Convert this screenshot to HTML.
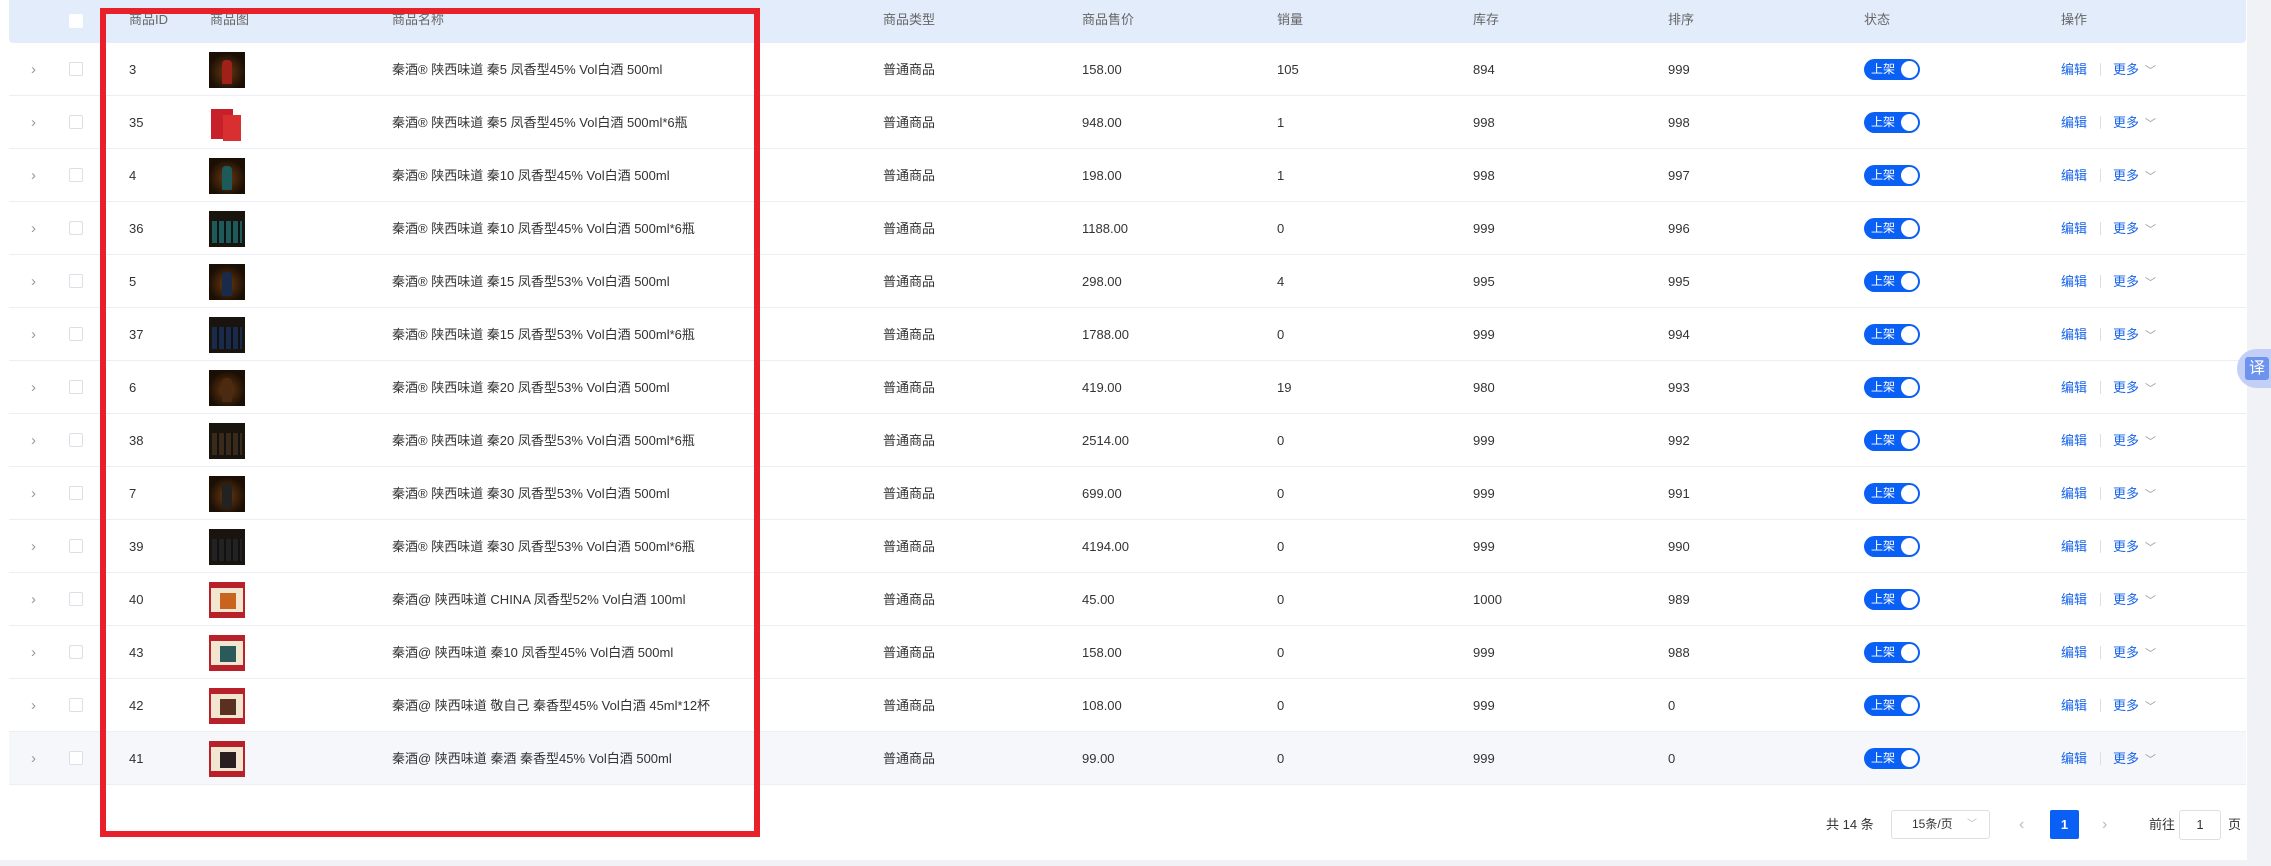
<!DOCTYPE html>
<html><head><meta charset="utf-8">
<style>
*{box-sizing:border-box;margin:0;padding:0}
body{width:2271px;height:866px;background:#f0f2f5;position:relative;overflow:hidden;font-family:"Liberation Sans","Noto Sans CJK SC",sans-serif;font-size:13px;color:#333}
.page{position:absolute;left:0;top:0;width:2247px;height:860px;background:#fff}
.hdr{position:absolute;left:9px;top:0;width:2237px;height:43px;background:#e3ecfb;border-radius:0 0 4px 4px;color:#666}
.c{position:absolute;white-space:nowrap}
.hdr .c{top:0;height:40px;line-height:40px}
.row{position:absolute;left:9px;width:2237px;height:53px;border-bottom:1px solid #ebeef5}
.row .c{top:0;height:53px;line-height:53px}
.cb{position:absolute;left:60px;width:14px;height:14px;border:1px solid #dcdfe6;border-radius:2px;background:#fff}
.arr{position:absolute;left:22px;top:0;line-height:53px;color:#999;font-size:15px}
.img{position:absolute;left:200px;top:9px;width:36px;height:36px}
.sw{position:absolute;left:1855px;top:16px;width:56px;height:21px;background:#0a5ff5;border-radius:11px;color:#fff;font-size:12px;line-height:21px;padding-left:7px}
.sw::after{content:"";position:absolute;right:2px;top:2px;width:17px;height:17px;border-radius:50%;background:#fff}
.op{position:absolute;left:2052px;top:0;line-height:53px;color:#1764ea;white-space:nowrap}
.op .sep{display:inline-block;width:1px;height:13px;background:#dcdfe6;margin:0 12px 0 13px;vertical-align:-2px}
.op .ch{color:#99a;font-size:11px;margin-left:6px}
.red{position:absolute;left:100px;top:8px;width:660px;height:829px;border:6px solid #e8202a}
.pg{position:absolute;top:810px;height:29px;line-height:29px;white-space:nowrap}
</style></head><body>
<div class="page">
<div class="hdr">
 <div class="cb" style="top:14px;border-color:#fff"></div>
 <div class="c" style="left:120px">商品ID</div>
 <div class="c" style="left:201px">商品图</div>
 <div class="c" style="left:383px">商品名称</div>
 <div class="c" style="left:874px">商品类型</div>
 <div class="c" style="left:1073px">商品售价</div>
 <div class="c" style="left:1268px">销量</div>
 <div class="c" style="left:1464px">库存</div>
 <div class="c" style="left:1659px">排序</div>
 <div class="c" style="left:1855px">状态</div>
 <div class="c" style="left:2052px">操作</div>
</div>
<div id="rows"></div>
<div class="pg" style="left:1826px">共 14 条</div>
<div class="pg" style="left:1891px;width:99px;border:1px solid #dcdfe6;border-radius:3px;font-size:12px;line-height:27px;padding-left:20px">15条/页<span style="position:absolute;right:12px;color:#bbb;font-size:10px">﹀</span></div>
<div class="pg" style="left:2019px;color:#bbb;font-size:16px">‹</div>
<div class="pg" style="left:2050px;width:29px;background:#0a5ff5;color:#fff;border-radius:2px;text-align:center;font-weight:bold">1</div>
<div class="pg" style="left:2102px;color:#bbb;font-size:16px">›</div>
<div class="pg" style="left:2149px">前往</div>
<div class="pg" style="left:2179px;width:42px;height:30px;border:1px solid #dcdfe6;border-radius:3px;text-align:center;line-height:28px">1</div>
<div class="pg" style="left:2228px">页</div>
<div class="red"></div>
</div>
<div style="position:absolute;left:2237px;top:349px;width:34px;height:39px;background:#c3cff7;border-radius:20px 0 0 20px"><div style="position:absolute;left:8px;top:8px;width:24px;height:23px;background:#6d93ee;border-radius:3px;color:#fff;text-align:center;line-height:23px;font-size:16px">译</div></div>
<script>
var d=[
[3,"秦酒® 陕西味道 秦5 凤香型45% Vol白酒 500ml","158.00",105,894,999,"d","#a0201a"],
[35,"秦酒® 陕西味道 秦5 凤香型45% Vol白酒 500ml*6瓶","948.00",1,998,998,"r","#c0202a"],
[4,"秦酒® 陕西味道 秦10 凤香型45% Vol白酒 500ml","198.00",1,998,997,"d","#1d5a5a"],
[36,"秦酒® 陕西味道 秦10 凤香型45% Vol白酒 500ml*6瓶","1188.00",0,999,996,"g","#1d5a5a"],
[5,"秦酒® 陕西味道 秦15 凤香型53% Vol白酒 500ml","298.00",4,995,995,"d","#1a2a4a"],
[37,"秦酒® 陕西味道 秦15 凤香型53% Vol白酒 500ml*6瓶","1788.00",0,999,994,"g","#1a2a4a"],
[6,"秦酒® 陕西味道 秦20 凤香型53% Vol白酒 500ml","419.00",19,980,993,"d","#4a2a10"],
[38,"秦酒® 陕西味道 秦20 凤香型53% Vol白酒 500ml*6瓶","2514.00",0,999,992,"g","#3a2a1a"],
[7,"秦酒® 陕西味道 秦30 凤香型53% Vol白酒 500ml","699.00",0,999,991,"d","#222"],
[39,"秦酒® 陕西味道 秦30 凤香型53% Vol白酒 500ml*6瓶","4194.00",0,999,990,"g","#222"],
[40,"秦酒@ 陕西味道 CHINA 凤香型52% Vol白酒 100ml","45.00",0,1000,989,"c","#c8641e"],
[43,"秦酒@ 陕西味道 秦10 凤香型45% Vol白酒 500ml","158.00",0,999,988,"c","#2a5a5a"],
[42,"秦酒@ 陕西味道 敬自己 秦香型45% Vol白酒 45ml*12杯","108.00",0,999,0,"c","#5a3020"],
[41,"秦酒@ 陕西味道 秦酒 秦香型45% Vol白酒 500ml","99.00",0,999,0,"c","#2a2020"]];
var h="";
d.forEach(function(r,i){
 var img;
 if(r[6]=="d") img='<div class="img" style="background:radial-gradient(circle at 50% 55%,#6a3a10,#1a0e05 70%)"><div style="position:absolute;left:13px;top:8px;width:10px;height:24px;background:'+r[7]+';border-radius:4px 4px 1px 1px"></div></div>';
 else if(r[6]=="r") img='<div class="img" style="background:#fff"><div style="position:absolute;left:2px;top:4px;width:22px;height:30px;background:#c8202a"></div><div style="position:absolute;left:14px;top:10px;width:18px;height:26px;background:#d83030"></div></div>';
 else if(r[6]=="g") img='<div class="img" style="background:#1a140e"><div style="position:absolute;left:3px;top:10px;width:30px;height:22px;background:repeating-linear-gradient(90deg,'+r[7]+' 0 5px,#111 5px 7px)"></div></div>';
 else img='<div class="img" style="background:#f3e6d0;border:2px solid #b8202a"><div style="position:absolute;left:0;right:0;top:0;height:4px;background:#b8202a"></div><div style="position:absolute;left:9px;top:9px;width:16px;height:16px;background:'+r[7]+'"></div><div style="position:absolute;left:0;right:0;bottom:0;height:4px;background:#b8202a"></div></div>';
 h+='<div class="row" style="top:'+(43+i*53)+'px;'+(i==13?'background:#f5f7fa':'')+'"><div class="arr">›</div><div class="cb" style="top:19px"></div>'
 +'<div class="c" style="left:120px">'+r[0]+'</div>'+img
 +'<div class="c" style="left:383px">'+r[1]+'</div>'
 +'<div class="c" style="left:874px">普通商品</div>'
 +'<div class="c" style="left:1073px">'+r[2]+'</div>'
 +'<div class="c" style="left:1268px">'+r[3]+'</div>'
 +'<div class="c" style="left:1464px">'+r[4]+'</div>'
 +'<div class="c" style="left:1659px">'+r[5]+'</div>'
 +'<div class="sw">上架</div>'
 +'<div class="op">编辑<span class="sep"></span>更多<span class="ch">﹀</span></div></div>';
});
document.getElementById("rows").outerHTML=h;
</script>
</body></html>
